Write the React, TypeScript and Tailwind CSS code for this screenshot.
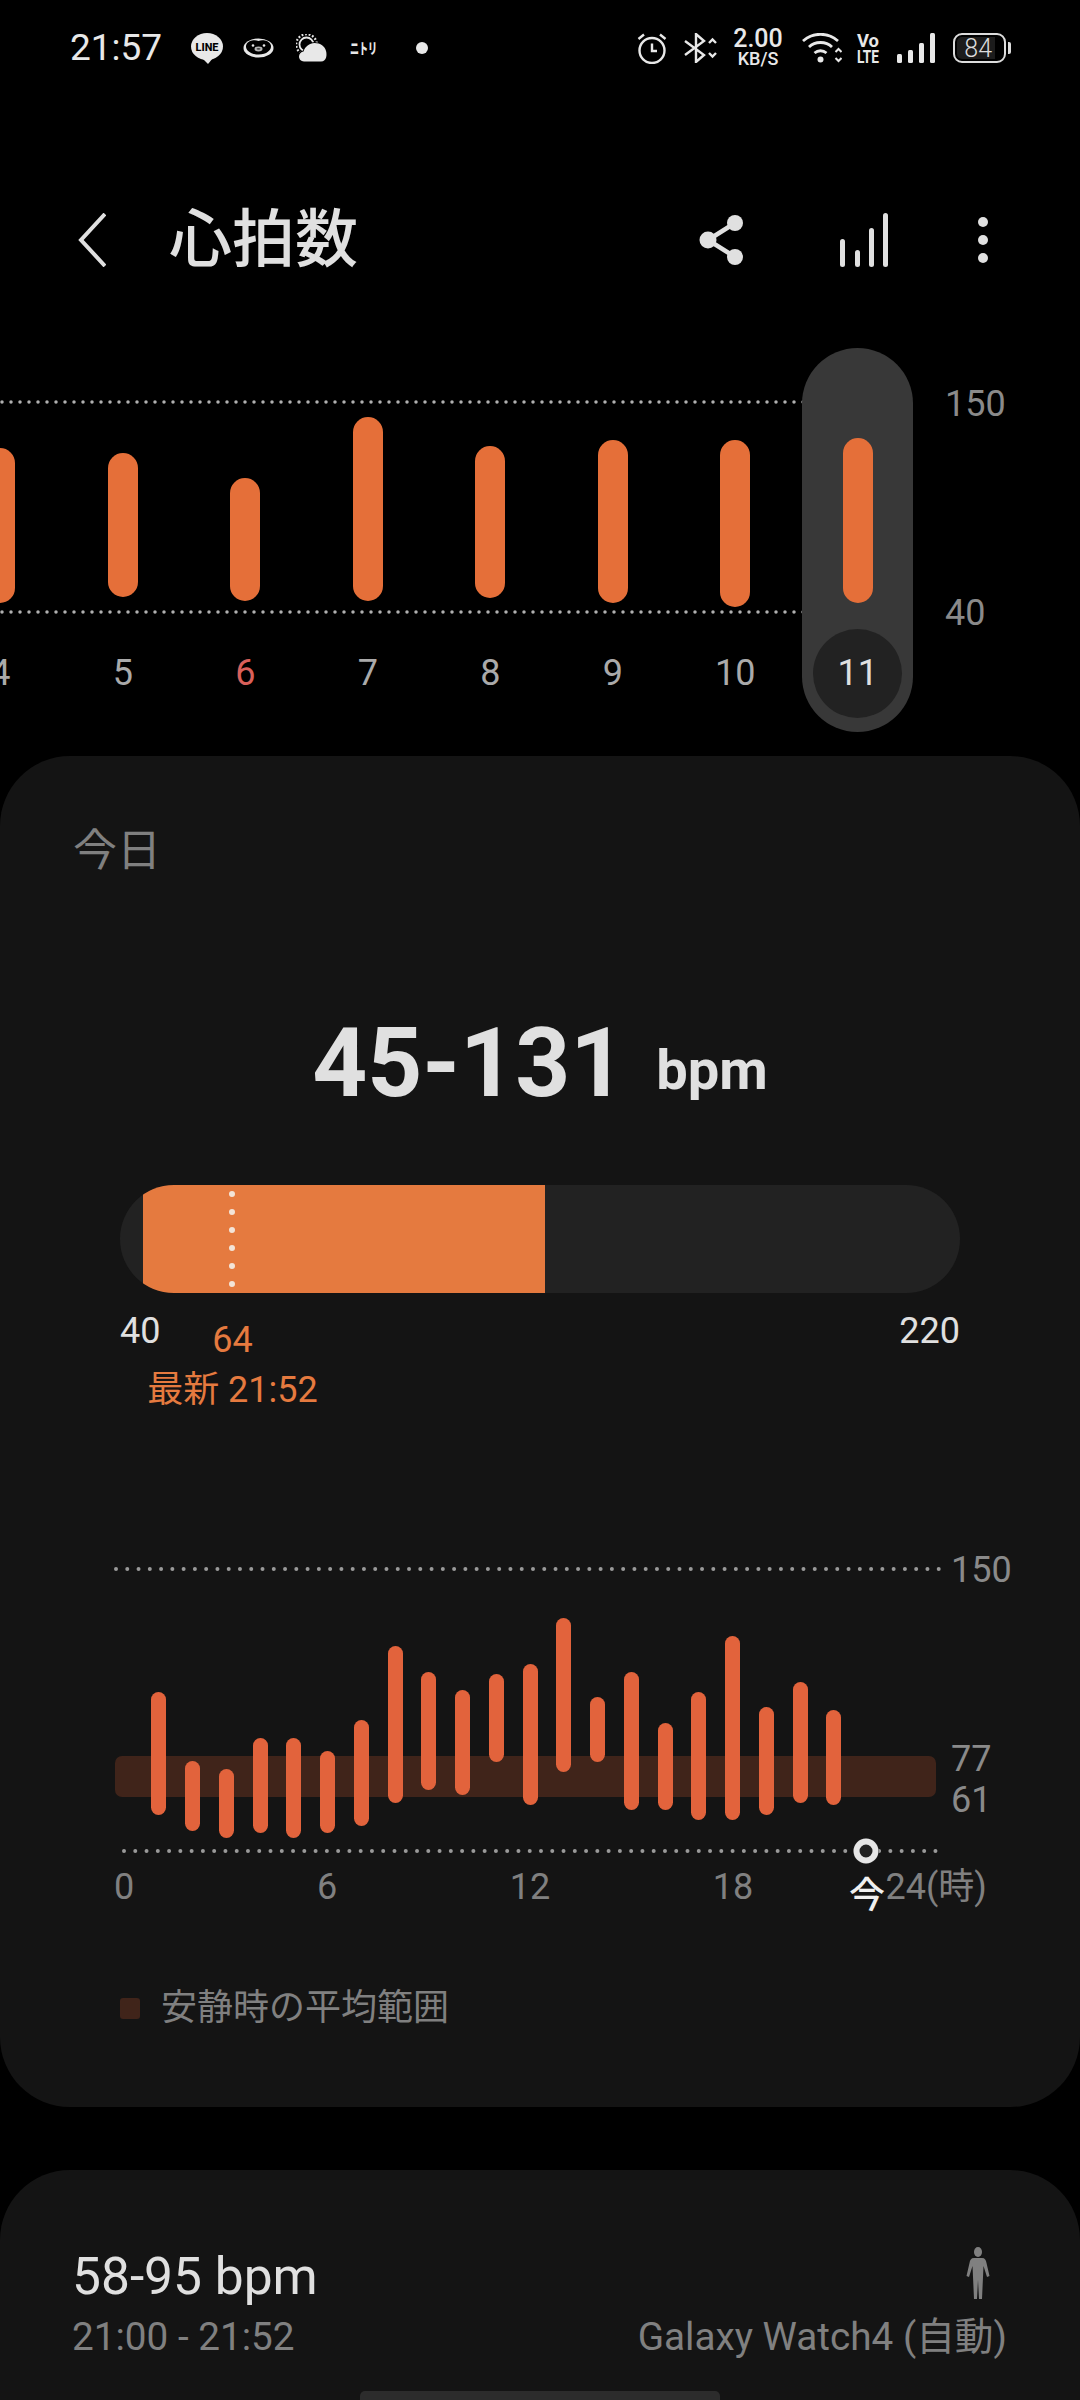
const ORANGE = "#e56f39";

const weekBars = [
  { label: "4", top: 448, bottom: 603 },
  { label: "5", top: 453, bottom: 597 },
  { label: "6", top: 478, bottom: 601, red: true },
  { label: "7", top: 417, bottom: 601 },
  { label: "8", top: 446, bottom: 598 },
  { label: "9", top: 440, bottom: 603 },
  { label: "10", top: 440, bottom: 607 },
  { label: "11", top: 438, bottom: 603, active: true },
];

// top / bottom of each hour bar, page coordinates
const hourBars = [
  [1692, 1815], [1761, 1831], [1769, 1838], [1738, 1833], [1738, 1838], [1751, 1833], [1720, 1826],
  [1646, 1803], [1672, 1790], [1690, 1795], [1674, 1762], [1664, 1805], [1618, 1772], [1697, 1762],
  [1672, 1810], [1723, 1810], [1692, 1820], [1636, 1820], [1707, 1815], [1682, 1803], [1710, 1805],
];

function LineIcon() {
  return (
    <svg width="32" height="31" viewBox="0 0 32 31" className="shrink-0">
      <ellipse cx="16" cy="13.5" rx="16" ry="13.5" fill="#e8e8e8" />
      <path d="M11 25 L17 31 L22 25 Z" fill="#e8e8e8" />
      <text x="16" y="17.5" textAnchor="middle" fontSize="11" fontWeight="800" fontFamily="Roboto" fill="#000" textLength="23" lengthAdjust="spacingAndGlyphs">LINE</text>
    </svg>
  );
}

function PenguinIcon() {
  return (
    <svg width="31" height="20" viewBox="0 0 31 20" className="shrink-0">
      <ellipse cx="15.5" cy="10" rx="15" ry="9.6" fill="#e8e8e8" />
      <path d="M15.5 3 C12 1.5 5 2.2 3.2 7 C2 11 6 16.2 15.5 16.5 C25 16.2 29 11 27.8 7 C26 2.2 19 1.5 15.5 3 Z" fill="#000" />
      <circle cx="10" cy="7.5" r="1.3" fill="#e8e8e8" />
      <circle cx="21" cy="7.5" r="1.3" fill="#e8e8e8" />
      <ellipse cx="15.5" cy="11" rx="4" ry="2.4" fill="#b5b5b5" />
      <ellipse cx="15.5" cy="10.8" rx="2" ry="0.9" fill="#444" />
    </svg>
  );
}

function WeatherIcon() {
  return (
    <svg width="31" height="28" viewBox="0 0 31 28" className="shrink-0">
      <circle cx="10.5" cy="10.5" r="7" fill="none" stroke="#e8e8e8" strokeWidth="1.8" />
      <circle cx="10.5" cy="10.5" r="10.3" fill="none" stroke="#e8e8e8" strokeWidth="2.2" strokeDasharray="1.8 1.8" />
      <path d="M8 27.5 C5 27.5 3 25.2 3 22.6 C3 20 5 18 7.5 17.6 C9 12.5 13.5 9 18.5 9 C24.5 9 29 12.5 30 17 C31 20 31 27.5 25 27.5 Z" fill="#e8e8e8" stroke="#000" strokeWidth="2" paintOrder="stroke" />
    </svg>
  );
}

function AlarmIcon() {
  return (
    <svg width="30" height="31" viewBox="0 0 30 31" fill="none" stroke="#e8e8e8" className="shrink-0">
      <circle cx="15" cy="17.5" r="12.5" strokeWidth="2.4" />
      <path d="M15 10.5 V18 H20" strokeWidth="2.4" />
      <path d="M1.5 6 L7 1.5 M28.5 6 L23 1.5" strokeWidth="2.4" />
    </svg>
  );
}

function BluetoothIcon() {
  return (
    <svg width="33" height="30" viewBox="0 0 33 30" fill="none" stroke="#e8e8e8" strokeWidth="2.4" className="shrink-0">
      <path d="M1 8 L20 22 L12 29 V1 L20 8 L1 22" />
      <path d="M25 10 L28.5 6.5 L32 10 M25 20 L28.5 23.5 L32 20" />
    </svg>
  );
}

function WifiIcon() {
  return (
    <svg width="40" height="30" viewBox="0 0 40 30" fill="none" stroke="#e8e8e8" className="shrink-0">
      <path d="M1 8 C11 -1 26 -1 36 8" strokeWidth="2.8" />
      <path d="M7 14 C13 8 24 8 30 14" strokeWidth="2.8" />
      <path d="M12.5 20 C16 17 21 17 24.5 20" strokeWidth="2.8" />
      <circle cx="18.5" cy="26.5" r="3" fill="#e8e8e8" stroke="none" />
      <path d="M33.5 19 L36.5 16 L39.5 19 M33.5 25 L36.5 28 L39.5 25" strokeWidth="2" />
    </svg>
  );
}

function VolteIcon() {
  return (
    <svg width="22" height="30" viewBox="0 0 22 30" className="shrink-0 overflow-visible" fill="#e8e8e8" fontFamily="Roboto" fontWeight="700">
      <text x="0" y="14" fontSize="19" textLength="22" lengthAdjust="spacingAndGlyphs">Vo</text>
      <text x="0" y="30" fontSize="18" textLength="22" lengthAdjust="spacingAndGlyphs">LTE</text>
    </svg>
  );
}

function SignalIcon() {
  return (
    <svg width="38" height="30" viewBox="0 0 38 30" fill="#e8e8e8" className="shrink-0">
      <rect x="0" y="21" width="5" height="9" rx="1.5" />
      <rect x="11" y="17" width="5" height="13" rx="1.5" />
      <rect x="22" y="10" width="5" height="20" rx="1.5" />
      <rect x="33" y="0" width="5" height="30" rx="1.5" />
    </svg>
  );
}

function Battery() {
  return (
    <div className="flex shrink-0 items-center">
      <div className="flex h-[30px] w-[53px] items-stretch rounded-[9px] border-2 border-[#dcdcdc] p-[2px]">
        <div className="flex w-[38px] items-center justify-end rounded-l-[5px] bg-[#1c1c1c] pr-[3px] text-[25px] leading-none font-light text-[#dcdcdc]">84</div>
      </div>
      <div className="ml-[2px] h-[12px] w-[3px] rounded-r-[2px] bg-[#dcdcdc]" />
    </div>
  );
}

function StatusBar() {
  return (
    <div className="flex h-[96px] items-center pr-[69px] pl-[70px]">
      <div className="w-[92px] whitespace-nowrap text-[37px] leading-[44px] text-[#e8e8e8]">21:57</div>
      <div className="ml-[29px]"><LineIcon /></div>
      <div className="ml-[20px]"><PenguinIcon /></div>
      <div className="ml-[22px]"><WeatherIcon /></div>
      <svg width="27" height="14" viewBox="0 0 27 14" className="ml-[23px] shrink-0 overflow-visible">
        <text x="0" y="13" fontSize="15" fontWeight="900" fontFamily="Noto Sans CJK JP" fill="#e8e8e8" textLength="27" lengthAdjust="spacingAndGlyphs">ニトリ</text>
      </svg>
      <div className="ml-[39px] h-[12px] w-[12px] rounded-full bg-[#e8e8e8]" />

      <div className="ml-auto flex items-center">
        <AlarmIcon />
        <div className="ml-[17px]"><BluetoothIcon /></div>
        <div className="ml-[16px] flex w-[50px] flex-col items-center whitespace-nowrap text-[#e8e8e8]">
          <span className="text-[25px] leading-[20px] font-medium">2.00</span>
          <span className="mt-[2px] text-[18px] leading-[16px] font-medium">KB/S</span>
        </div>
        <div className="ml-[19px]"><WifiIcon /></div>
        <div className="ml-[15px]"><VolteIcon /></div>
        <div className="ml-[18px]"><SignalIcon /></div>
        <div className="ml-[18px]"><Battery /></div>
      </div>
    </div>
  );
}

function Header() {
  return (
    <div className="mt-[96px] flex h-[96px] items-center pr-[92px] pl-[78px] text-[#e0e0e0]">
      <svg width="28" height="54" viewBox="0 0 28 54" fill="none" stroke="#e0e0e0" strokeWidth="4" className="shrink-0">
        <path d="M27 1 L3 27 L27 53" />
      </svg>
      <h1 className="ml-[63px] text-[63px] leading-[80px] font-medium">心拍数</h1>
      <svg width="46" height="50" viewBox="0 0 46 50" fill="#e0e0e0" className="ml-auto shrink-0">
        <path d="M36 8 L9 25 L36 42" fill="none" stroke="#e0e0e0" strokeWidth="4.5" />
        <circle cx="36" cy="8" r="8" />
        <circle cx="9" cy="25" r="8.5" />
        <circle cx="36" cy="42" r="8" />
      </svg>
      <svg width="48" height="54" viewBox="0 0 48 54" fill="#e0e0e0" className="ml-[95px] shrink-0">
        <rect x="0" y="26" width="5" height="28" rx="2.5" />
        <rect x="15" y="37" width="5" height="17" rx="2.5" />
        <rect x="29" y="15" width="5" height="39" rx="2.5" />
        <rect x="43" y="0" width="5" height="54" rx="2.5" />
      </svg>
      <div className="ml-[90px] flex flex-col gap-[8px]">
        <div className="h-[10px] w-[10px] rounded-full bg-[#e0e0e0]" />
        <div className="h-[10px] w-[10px] rounded-full bg-[#e0e0e0]" />
        <div className="h-[10px] w-[10px] rounded-full bg-[#e0e0e0]" />
      </div>
    </div>
  );
}

function WeekChart() {
  return (
    <div className="relative flex h-[468px] overflow-hidden">
      <svg width="806" height="330" className="absolute top-0 left-0">
        <line x1="2" y1="114" x2="806" y2="114" stroke="#b0b0b0" strokeWidth="3.5" strokeLinecap="round" strokeDasharray="0 9" />
        <line x1="2" y1="324" x2="806" y2="324" stroke="#b0b0b0" strokeWidth="3.5" strokeLinecap="round" strokeDasharray="0 9" />
      </svg>
      <div className="-ml-[61px] flex w-[980px] shrink-0">
        {weekBars.map((b) => (
          <div key={b.label} className="relative flex w-[122.5px] flex-col items-center">
            {b.active && (
              <div className="absolute top-[60px] left-[5.75px] h-[384px] w-[111px] rounded-full bg-[#383838]">
                <div className="absolute top-[281px] left-[11px] h-[89px] w-[89px] rounded-full bg-[#222222]" />
              </div>
            )}
            <div className="relative h-[363px]">
              <div
                className="w-[30px] rounded-full"
                style={{ marginTop: b.top - 288, height: b.bottom - b.top, backgroundColor: ORANGE }}
              />
            </div>
            <div className={`relative h-[44px] text-[36px] leading-[44px] ${b.red ? "text-[#d9605a]" : b.active ? "text-[#e0e0e0]" : "text-[#aaaaaa]"}`}>
              {b.label}
            </div>
          </div>
        ))}
      </div>
      <div className="absolute top-[94px] left-[945px] text-[36px] leading-[44px] text-[#8a8a8a]">150</div>
      <div className="absolute top-[303px] left-[945px] text-[36px] leading-[44px] text-[#8a8a8a]">40</div>
    </div>
  );
}

function RangeBar() {
  return (
    <>
      <div className="mx-[120px] mt-[67px] h-[108px] overflow-hidden rounded-[54px] bg-[#222222]">
        <div className="relative ml-[23px] h-full w-[402px] bg-[#e57a3f]">
          <svg width="8" height="108" className="absolute top-0 left-[85px]">
            <line x1="4" y1="9" x2="4" y2="102" stroke="#f3e4d8" strokeWidth="6" strokeLinecap="round" strokeDasharray="0 18" />
          </svg>
        </div>
      </div>
      <div className="mx-[120px] mt-[16px] flex items-start text-[36px] leading-[44px]">
        <span className="text-[#e0e0e0]">40</span>
        <div className="-ml-[12px] flex w-[168px] flex-col items-center whitespace-nowrap pt-[9px] text-[#e57a3f]">
          <span>64</span>
          <span className="mt-[6px]">最新 21:52</span>
        </div>
        <span className="ml-auto text-[#e0e0e0]">220</span>
      </div>
    </>
  );
}

function DayChart() {
  return (
    <>
      <div className="relative mt-[128px] h-[325px]">
        <div className="absolute top-[216px] left-[115px] h-[41px] w-[821px] rounded-[7px] bg-[#40241a]" />
        <svg width="1080" height="325" className="absolute top-0 left-0">
          <line x1="116" y1="29" x2="939" y2="29" stroke="#9a9a9a" strokeWidth="4" strokeLinecap="round" strokeDasharray="0 11.27" />
          <line x1="124" y1="311" x2="938" y2="311" stroke="#9a9a9a" strokeWidth="4" strokeLinecap="round" strokeDasharray="0 11.27" />
          <circle cx="866" cy="311" r="13" fill="#222" />
          <circle cx="866" cy="311" r="9.5" fill="none" stroke="#e6e6e6" strokeWidth="6" />
        </svg>
        <div className="absolute top-0 left-[142px] flex items-start">
          {hourBars.map(([top, bottom], i) => (
            <div key={i} className="flex w-[33.76px] justify-center">
              <div
                className="w-[15px] rounded-full bg-[#e2633c]"
                style={{ marginTop: top - 1540, height: bottom - top }}
              />
            </div>
          ))}
        </div>
        <div className="absolute top-[8px] left-[951px] text-[36px] leading-[44px] text-[#8a8a8a]">150</div>
        <div className="absolute top-[197px] left-[951px] text-[36px] leading-[44px] text-[#8a8a8a]">77</div>
        <div className="absolute top-[238px] left-[951px] text-[36px] leading-[44px] text-[#8a8a8a]">61</div>
      </div>
      <div className="relative flex h-[44px] pl-[22.5px] text-[36px] leading-[44px] text-[#808080]">
        <div className="w-[203px] text-center">0</div>
        <div className="w-[203px] text-center">6</div>
        <div className="w-[203px] text-center">12</div>
        <div className="w-[203px] text-center">18</div>
        <div className="ml-[51px] whitespace-nowrap">24(時)</div>
        <div className="absolute top-[9px] left-[849px] text-[36px] leading-[44px] font-medium text-[#f0f0f0]">今</div>
      </div>
      <div className="mt-[77px] flex h-[44px] items-center pl-[120px]">
        <div className="h-[21px] w-[20px] rounded-[3px] bg-[#40241a]" />
        <span className="ml-[21px] text-[36px] leading-[44px] text-[#808080]">安静時の平均範囲</span>
      </div>
    </>
  );
}

function TodayCard() {
  return (
    <div className="h-[1351px] overflow-hidden rounded-[70px] bg-[#141414] pt-[63px]">
      <div className="pl-[73px] text-[44px] leading-[64px] text-[#808080]">今日</div>
      <div className="mt-[125px] flex h-[110px] items-baseline justify-center gap-[31px] font-bold text-[#e0e0e0]">
        <span className="text-[96px] leading-[110px]">45-131</span>
        <span className="-translate-y-[7px] text-[56px] leading-[110px]">bpm</span>
      </div>
      <RangeBar />
      <DayChart />
    </div>
  );
}

function RecordCard() {
  return (
    <div className="mt-[63px] h-[300px] rounded-t-[70px] bg-[#141414] pt-[70px] pr-[73px] pl-[72px]">
      <div className="flex h-[70px] items-end justify-between">
        <span className="text-[51.5px] leading-[66px] text-[#e0e0e0]">58-95 bpm</span>
        <svg width="24" height="52" viewBox="0 0 24 52" fill="#808080" className="mr-[17px] mb-[11px] shrink-0">
          <ellipse cx="12" cy="5" rx="4" ry="5" />
          <path d="M8 11 H16 C19 11 20 13 20.5 16 L23.5 29 L21 30 L17.5 19 L17 30 L16 52 H13 L12 33 L11 52 H8 L7 30 L6.5 19 L3 30 L0.5 29 L3.5 16 C4 13 5 11 8 11 Z" />
        </svg>
      </div>
      <div className="mt-[2px] flex items-center justify-between text-[38.7px] leading-[50px] text-[#808080]">
        <span>21:00 - 21:52</span>
        <span>Galaxy Watch4 (自動)</span>
      </div>
    </div>
  );
}

export default function App() {
  return (
    <div className="relative h-[2400px] w-[1080px] overflow-hidden bg-black [font-family:Roboto,'Noto_Sans_CJK_JP',sans-serif]">
      <StatusBar />
      <Header />
      <WeekChart />
      <TodayCard />
      <RecordCard />
      <div className="absolute bottom-0 left-[360px] h-[9px] w-[360px] rounded-t-[5px] bg-[#2c2c2c]" />
    </div>
  );
}
